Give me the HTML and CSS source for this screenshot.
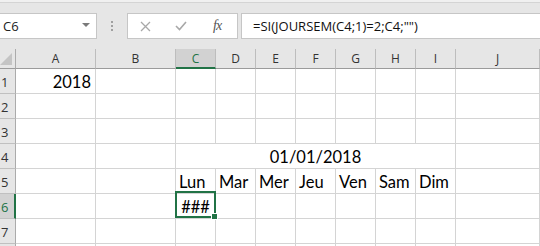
FILE: index.html
```html
<!DOCTYPE html>
<html lang="fr">
<head>
    <meta charset="UTF-8">
    <title>Classeur - Excel</title>
    <link rel="stylesheet" href="styles.css">
</head>
<body>
    <div class="ribbon-edge"></div>
    <div class="toolbar">
        <div class="namebox">
            <span class="name">C6</span>
            <span class="caret"></span>
        </div>
        <div class="grip"><i></i><i></i><i></i></div>
        <div class="fbuttons">
            <svg class="ficon" width="11" height="11" viewBox="0 0 11 11">
                <path d="M1 1 L10 10 M10 1 L1 10" stroke="#a8a8a8" stroke-width="1.3" fill="none"/>
            </svg>
            <svg class="ficon" width="12" height="10" viewBox="0 0 12 10">
                <path d="M1 5 L4.5 8.5 L11 1" stroke="#a8a8a8" stroke-width="1.6" fill="none"/>
            </svg>
            <span class="fx">fx</span>
        </div>
        <div class="formula">=SI(JOURSEM(C4;1)=2;C4;"")</div>
    </div>

    <div class="sheet">
        <div class="corner"><span class="tri"></span></div>
        <div class="colhead">A</div>
        <div class="colhead">B</div>
        <div class="colhead active">C</div>
        <div class="colhead">D</div>
        <div class="colhead">E</div>
        <div class="colhead">F</div>
        <div class="colhead">G</div>
        <div class="colhead">H</div>
        <div class="colhead">I</div>
        <div class="colhead">J</div>

        <div class="rowhead">1</div>
        <div class="cell num">2018</div>
        <div class="cell"></div><div class="cell"></div><div class="cell"></div><div class="cell"></div>
        <div class="cell"></div><div class="cell"></div><div class="cell"></div><div class="cell"></div><div class="cell"></div>

        <div class="rowhead">2</div>
        <div class="cell"></div><div class="cell"></div><div class="cell"></div><div class="cell"></div><div class="cell"></div>
        <div class="cell"></div><div class="cell"></div><div class="cell"></div><div class="cell"></div><div class="cell"></div>

        <div class="rowhead">3</div>
        <div class="cell"></div><div class="cell"></div><div class="cell"></div><div class="cell"></div><div class="cell"></div>
        <div class="cell"></div><div class="cell"></div><div class="cell"></div><div class="cell"></div><div class="cell"></div>

        <div class="rowhead">4</div>
        <div class="cell"></div><div class="cell"></div>
        <div class="cell merged">01/01/2018</div>
        <div class="cell"></div>

        <div class="rowhead">5</div>
        <div class="cell"></div><div class="cell"></div>
        <div class="cell day">Lun</div>
        <div class="cell day">Mar</div>
        <div class="cell day">Mer</div>
        <div class="cell day">Jeu</div>
        <div class="cell day">Ven</div>
        <div class="cell day">Sam</div>
        <div class="cell day">Dim</div>
        <div class="cell"></div>

        <div class="rowhead active">6</div>
        <div class="cell"></div><div class="cell"></div>
        <div class="cell center selected">###<span class="sel"><span class="handle"></span></span></div>
        <div class="cell"></div><div class="cell"></div><div class="cell"></div><div class="cell"></div>
        <div class="cell"></div><div class="cell"></div><div class="cell"></div>

        <div class="rowhead">7</div>
        <div class="cell"></div><div class="cell"></div><div class="cell"></div><div class="cell"></div><div class="cell"></div>
        <div class="cell"></div><div class="cell"></div><div class="cell"></div><div class="cell"></div><div class="cell"></div>

        <div class="rowhead last"></div>
        <div class="cell"></div><div class="cell"></div><div class="cell"></div><div class="cell"></div><div class="cell"></div>
        <div class="cell"></div><div class="cell"></div><div class="cell"></div><div class="cell"></div><div class="cell"></div>
    </div>
</body>
</html>
```

FILE: styles.css
```css
/* Excel-like formula bar and grid */
body, html {
    margin: 0;
    padding: 0;
    overflow: hidden;
    background: #fff;
}
.ribbon-edge {
    height: 2px;
    background: #f0f0f0;
    border-bottom: 1px solid #d4d4d4;
}
.toolbar {
    height: 46px;
    box-sizing: border-box;
    padding-top: 10px;
    background: #e6e6e6;
    display: flex;
    align-items: flex-start;
    font-family: "Open Sans", "DejaVu Sans", sans-serif;
}
.namebox {
    width: 97px;
    height: 26px;
    box-sizing: border-box;
    background: #fff;
    border: 1px solid #c6c6c6;
    border-left: none;
    display: flex;
    align-items: center;
    justify-content: space-between;
    padding: 0 6px 0 3px;
}
.name {
    font-size: 13px;
    color: #222;
}
.caret {
    width: 0;
    height: 0;
    border-left: 4px solid transparent;
    border-right: 4px solid transparent;
    border-top: 4px solid #7a7a7a;
    margin-top: -2px;
}
.grip {
    width: 30px;
    height: 26px;
    display: flex;
    flex-direction: column;
    align-items: center;
    justify-content: center;
    gap: 2px;
}
.grip i {
    display: block;
    width: 2px;
    height: 2px;
    background: #a0a0a0;
}
.fbuttons {
    width: 111px;
    height: 26px;
    box-sizing: border-box;
    background: #fff;
    border: 1px solid #c6c6c6;
    display: flex;
    align-items: center;
    padding-left: 12px;
}
.ficon {
    display: block;
}
.ficon + .ficon {
    margin-left: 24px;
}
.fx {
    margin-left: 26px;
    font-family: "Liberation Serif", "DejaVu Serif", serif;
    font-style: italic;
    font-size: 14px;
    color: #555;
    letter-spacing: -1px;
}
.formula {
    flex: 1;
    height: 26px;
    box-sizing: border-box;
    margin-left: 3px;
    background: #fff;
    border: 1px solid #c6c6c6;
    border-right: none;
    padding-left: 11px;
    font-size: 13px;
    line-height: 24px;
    color: #111;
    white-space: nowrap;
}
.sheet {
    display: grid;
    grid-template-columns: 16px 80px 80px repeat(7, 40px) 1fr;
    grid-template-rows: 20px repeat(8, 25px);
    height: 197px;
    overflow: hidden;
}
.corner, .colhead, .rowhead, .cell {
    box-sizing: border-box;
}
.corner {
    background: #e6e6e6;
    border-right: 1px solid #ababab;
    border-bottom: 1px solid #9b9b9b;
    position: relative;
}
.tri {
    position: absolute;
    right: 3px;
    bottom: 3px;
    width: 0;
    height: 0;
    border-left: 12px solid transparent;
    border-bottom: 12px solid #c4c4c4;
}
.colhead {
    background: #e6e6e6;
    border-right: 1px solid #bdbdbd;
    border-bottom: 1px solid #9b9b9b;
    font-family: "Open Sans", "DejaVu Sans", sans-serif;
    font-size: 12px;
    line-height: 19px;
    text-align: center;
    color: #333;
}
.colhead.active {
    background: #d2d2d2;
    border-bottom: 2px solid #217346;
    color: #217346;
}
.rowhead {
    background: #e6e6e6;
    border-right: 1px solid #ababab;
    border-bottom: 1px solid #c0c0c0;
    font-family: "Open Sans", "DejaVu Sans", sans-serif;
    font-size: 13px;
    line-height: 26px;
    color: #333;
    white-space: nowrap;
    padding-left: 1px;
}
.rowhead.active {
    background: #d2d2d2;
    border-right: 2px solid #217346;
    color: #217346;
}
.cell {
    border-right: 1px solid #d4d4d4;
    border-bottom: 1px solid #d4d4d4;
    font-family: Lato, "Liberation Sans", sans-serif;
    font-size: 16.5px;
    line-height: 26px;
    color: #000;
    white-space: nowrap;
    overflow: hidden;
}
.num {
    text-align: right;
    padding-right: 4px;
}
.merged {
    grid-column: span 7;
    text-align: center;
}
.day {
    padding-left: 3px;
}
.center {
    text-align: center;
}
.selected {
    position: relative;
    overflow: visible;
}
.sel {
    position: absolute;
    top: -3px;
    left: -1px;
    right: -1px;
    bottom: 0;
    border: 2px solid #217346;
}
.handle {
    position: absolute;
    right: -4px;
    bottom: -4px;
    width: 5px;
    height: 5px;
    background: #217346;
    border: 1px solid #fff;
}
```
